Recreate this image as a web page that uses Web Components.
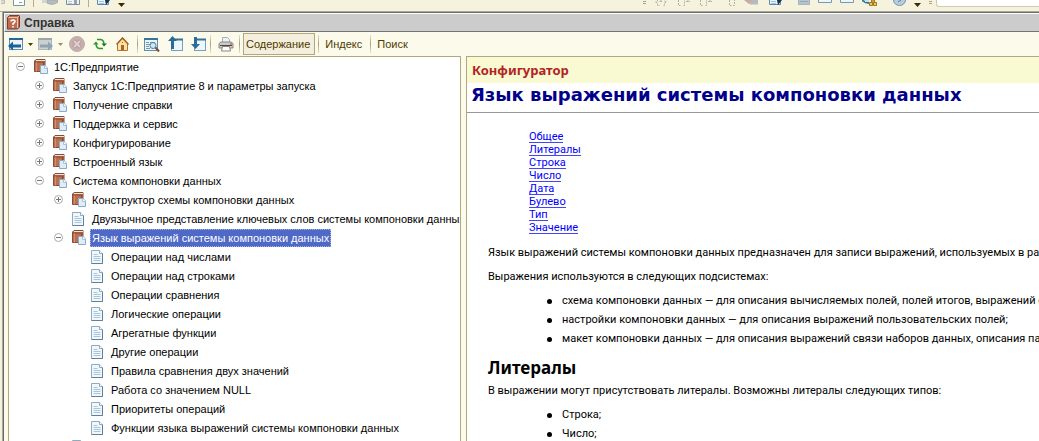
<!DOCTYPE html>
<html lang="ru">
<head>
<meta charset="utf-8">
<title>Справка</title>
<style>
  html, body { height: 100%; }
  body { margin: 0; overflow: hidden; font: 11px/13px "Liberation Sans", Arial, sans-serif; color: #000; background: #f5f2dd; }
</style>
</head>
<body>
<help-app></help-app>

<script>
const ICONS = {
  book: [15, 15, `<path d="M.5 2 2 .5h9v10.500l-1.500 1.500h-9z" fill="#b8704e" stroke="#8a4a33"/><path d="M2 1.500h9" stroke="#f2e4da"/><path d="M1 3h8.500" stroke="#8a4a33"/><path d="M2.500 3.500v9" stroke="#cf8f70"/><path d="M9.500 3v9" stroke="#8a4a33"/><path d="M6.500 6.500h4.500l2.500 2.500v5.500h-7z" fill="#deedf8" stroke="#8cabc2"/><path d="M10.500 6.500v3h3" fill="#fff" stroke="#a9c3d6"/>`],
  page: [12, 14, `<path d="M.5.5h8l3 3v10H.5z" fill="#f1f8fd" stroke="#8fabc0"/><path d="M11.500 3.500v10H.5" fill="none" stroke="#617f98"/><path d="M8.500.5v3h3" fill="#fff" stroke="#8fabc0"/><path d="M2.500 4.500h4m-4 2h7m-7 2h7m-7 2h7" stroke="#a9c5da"/>`],
  help: [13, 15, `<path d="M.5 2.500 2.500.5h10v11.500l-2 2H.5z" fill="#c06c4c" stroke="#763e2c"/><path d="M1.500 2.500h9v10.500M10.500 2.500l2-2" fill="none" stroke="#e8c5b2"/><path d="M4 6.500q0-1.500 2-1.500t2 1.500q0 1-2 2V10M6 11v1.500" fill="none" stroke="#fff" stroke-width="1.500"/>`],
  back: [15, 14, `<rect x="1.500" y="1.500" width="13" height="11" fill="#edf7fb" stroke="#5d8db2"/><path d="M1 2h14" stroke="#286698" stroke-width="2"/><path d="M0 9 5 4.500v3h8v3H5v3z" fill="#1c629a"/>`],
  forward: [15, 14, `<rect x=".5" y="1.500" width="13" height="11" fill="#ccd1cf" stroke="#adb7b9"/><path d="M0 2h14" stroke="#98a7ae" stroke-width="2"/><path d="M15 9 10 4.500v3H2v3h8v3z" fill="#8fa4b1"/>`],
  stop: [16, 16, `<circle cx="8" cy="8" r="7.500" fill="#c9b0b0" stroke="#c2aaaa"/><path d="m4.500 4.500 7 7m0-7-7 7" stroke="#b89c9c" stroke-width="4"/><path d="m5 5 6 6m0-6-6 6" stroke="#e0d0d0" stroke-width="2"/>`],
  refresh: [14, 12, `<path d="M4 1.500h3q4 0 4 5" fill="none" stroke="#2b9d23" stroke-width="1.500"/><path d="M8.500 5.500H14L11 8.500z" fill="#167b16"/><path d="M10 10.500H7q-4 0-4-5" fill="none" stroke="#2b9d23" stroke-width="1.500"/><path d="M0 6.500h5.500L3 3.500z" fill="#2c9a20"/>`],
  home: [13, 14, `<path d="M1.500 6.500 6.500 1l5 5.500v7h-10z" fill="#ffe3a2" stroke="#b57437"/><path d="M.5 7.500 6.500 1l6 6.500" fill="none" stroke="#a25c20" stroke-width="1.500"/><path d="M5 13V8h3v5z" fill="#a8622f"/><path d="M6 5h1v1H6z" fill="#a25c20"/>`],
  find: [16, 15, `<rect x=".5" y="1.500" width="13" height="12" fill="#e9f4f8" stroke="#608eae"/><path d="M0 2h14" stroke="#38739e" stroke-width="2"/><path d="M2 5.500h3m1 0h5m-9 2h4m-4 2h3m-3 2h4" stroke="#7798a8"/><circle cx="9" cy="8.500" r="3" fill="#cde9f2" stroke="#4e7f99"/><path d="m11.500 10.500 3.500 4" stroke="#765046" stroke-width="2"/>`],
  up: [15, 16, `<rect x="3.500" y="3.500" width="11" height="11" fill="#edf7fb" stroke="#77a0bc"/><path d="M5 3.500h10" stroke="#357099" stroke-width="2"/><path d="M4.500 0 0 5h3v8h3V5h3z" fill="#276c9d"/>`],
  down: [15, 16, `<rect x="3.500" y="3.500" width="11" height="11" fill="#edf7fb" stroke="#77a0bc"/><path d="M5 3.500h10" stroke="#357099" stroke-width="2"/><path d="M4.500 13 0 8h3V1h3v7h3z" fill="#276c9d"/>`],
  print: [16, 15, `<path d="M4.500 6V.5h5l2 2V6" fill="#eaf3f8" stroke="#9fb0bb"/><path d="M1 6.500 3 5h10l2 1.500V11H1z" fill="#d0cac6" stroke="#8b8785"/><path d="M2 8.500h12" stroke="#4a4745"/><path d="M4.500 9.500h7l1 4.500h-9z" fill="#fff" stroke="#8d8580"/><path d="M12 7h2" stroke="#d14122"/>`],
  caret: [5, 3, `<path d="M0 0h5L2.500 3z" fill="#4a3b00"/>`],
  caretdim: [5, 3, `<path d="M0 0h5L2.500 3z" fill="#a58a63"/>`],
  caretbig: [7, 4, `<path d="M0 0h7L3.500 4z" fill="#3f2b00"/>`],
  plus: [9, 9, `<circle cx="4.500" cy="4.500" r="4" fill="#fff" stroke="#aaa"/><path d="M2 4.500h5M4.500 2v5" stroke="#777"/>`],
  minus: [9, 9, `<circle cx="4.500" cy="4.500" r="4" fill="#fff" stroke="#aaa"/><path d="M2 4.500h5" stroke="#777"/>`],
  dimdoc: [4, 5, `<path d="M0 0h3.500v3.500H0" fill="#dcdcd3" stroke="#b9bbb5"/>`],
  doc: [12, 6, `<path d="M.5 0v5.500h11V0" fill="#fff" stroke="#7795ab"/><path d="M6 2.500h3" stroke="#7ba7c4"/>`],
  db: [16, 5, `<path d="M0 0h4v3H0z" fill="#d4d5ce"/><path d="M5 0h11v2q-5 4-11 1z" fill="#b5bcc0" stroke="#a1a9ad"/>`],
  table: [14, 5, `<path d="M.5 0v4.500h13V0" fill="#eef4f6" stroke="#7891a3"/><path d="M2 1.500h4m-4 2h4" stroke="#b4c7ce"/><path d="M8 0h3v4H8z" fill="#9aa3a8"/>`],
  edit: [13, 5, `<path d="M.5 0v4.500h11V0" fill="#e9f4fb" stroke="#5b89b3"/><path d="M2 1.500h5m-5 2h5" stroke="#9dc0da"/><path d="M8 0h5L9 5z" fill="#16344f"/>`],
  braceplus: [14, 6, `<path d="M3.500 0v1l-2 1 2 1v2.500h2M9.500 5.500h1V3l2-1-2-1V0M5.500 1.500h3M7 0v3" fill="none" stroke="#b1b0a5" stroke-dasharray="2 1"/>`],
  brace: [14, 6, `<path d="M2.500 0v5.500h2M7.500 5.500h1V0M10 1.500h4M12 0v3" fill="none" stroke="#b1b0a5" stroke-dasharray="2 1"/>`],
  braces: [8, 6, `<path d="M1.500 0v5.500h2M5 5.500h1.500V0" fill="none" stroke="#b1b0a5" stroke-dasharray="2 1"/>`],
  brush: [14, 5, `<path d="M4 0h10v4.500H6z" fill="#b7b9ba"/><path d="M0 0h8L5 4z" fill="#c5aca0"/>`],
  dimtable: [12, 5, `<path d="M.5 0v4.500h11V0" fill="#b6c3ce" stroke="#a7b4be"/><path d="M2 1.500h8" stroke="#96a9b9"/>`],
  sheet: [14, 3, `<path d="M.5 0v2.500h13V0" fill="#eef6fb" stroke="#6f9ab8"/>`],
  search: [15, 6, `<path d="M0 0q3 3 7 3" fill="none" stroke="#2c7d9b" stroke-width="2"/><path d="M3 0h4v2H3z" fill="#bfe2ef"/><path d="M9.500 0h3v2h-3zM7.500 2.500h3v3h-3zM11.500 2.500h3v3h-3z" fill="#f6c54a" stroke="#a1772a"/>`],
  clock: [13, 6, `<path d="M.5 0a6 5.500 0 0 0 12 0" fill="#a9d1ea" stroke="#84939e"/><path d="m5 2 3-2" stroke="#d44"/>`]
};

class UiIcon extends HTMLElement {
  constructor() {
    super();
    this.attachShadow({ mode: "open" });
  }
  connectedCallback() {
    const [w, h, body] = ICONS[this.getAttribute("name")];
    this.shadowRoot.innerHTML = `<style>:host{display:block;flex:none}svg{display:block}</style>
      <svg width="${w}" height="${h}" viewBox="0 0 ${w} ${h}" aria-hidden="true">${body}</svg>`;
  }
}

class ToolButton extends HTMLElement {
  constructor() {
    super();
    this.attachShadow({ mode: "open" });
  }
  connectedCallback() {
    const icon = this.getAttribute("icon");
    this.shadowRoot.innerHTML = `<style>
      :host{display:block;flex:none}
      button{display:flex;align-items:center;justify-content:center;box-sizing:border-box;height:22px;margin:0;padding:0;
        border:0;background:none;color:#4d3a00;font:inherit}
      button.text{padding:0 4px 0 2px;border:1px solid transparent}
      :host([pressed]) button{border-color:#b3a77c;background:#f3efdc}
      </style>
      <button type="button" class="${icon ? "icon" : "text"}" aria-label="${this.getAttribute("label") || this.textContent}">
      ${icon ? `<ui-icon name="${icon}"></ui-icon>` : "<slot></slot>"}</button>`;
  }
}

class ToolSeparator extends HTMLElement {
  constructor() {
    super();
    this.attachShadow({ mode: "open" }).innerHTML = `<style>:host{display:block;flex:none;width:1px;height:18px;
      background:linear-gradient(#e6e1c6,#a89e78 50%,#e6e1c6)}</style>`;
  }
}

/* The lower edge of the main window's toolbar, above the help window. */
class MainStrip extends HTMLElement {
  constructor() {
    super();
    this.attachShadow({ mode: "open" }).innerHTML = `<style>
      :host{display:flex;justify-content:space-between;height:11px;overflow:hidden;background:#f5f2dd}
      .group{display:flex;align-items:flex-start;gap:8px}
      .left{padding-left:1px}
      .right{width:396px;flex:none}
      .caret{padding-top:3px}
      .sep{width:1px;height:7px;background:#b6ad8a}
      .grip{flex:none;width:3px;height:1px;margin-top:1px;border:solid #a9a27e;border-width:1px 0}
      .apart{padding-left:8px}
      .brush{padding-right:3px}
      .box{flex:1;display:flex;margin-left:-4px}
      input{flex:1;min-width:0;box-sizing:border-box;height:7px;margin:0;padding:0;border:1px solid #d2cba9;border-top:0;
        border-right:0;border-radius:0 0 0 3px;background:#fff}
      </style>
      <div class="group left"><ui-icon name="dimdoc"></ui-icon><ui-icon name="doc"></ui-icon><div class="sep"></div>
      <ui-icon name="db"></ui-icon><ui-icon name="table"></ui-icon><div class="sep"></div><ui-icon name="edit"></ui-icon>
      <ui-icon class="caret" name="caretbig"></ui-icon></div>
      <div class="group right"><div class="grip"></div><ui-icon name="braceplus"></ui-icon><ui-icon name="brace"></ui-icon>
      <ui-icon name="brace"></ui-icon><ui-icon class="apart" name="braces"></ui-icon><ui-icon class="brush" name="brush"></ui-icon><ui-icon name="edit"></ui-icon>
      <div class="sep"></div><ui-icon name="dimtable"></ui-icon><ui-icon name="sheet"></ui-icon><ui-icon name="sheet"></ui-icon>
      <ui-icon name="search"></ui-icon><div class="sep"></div><ui-icon name="clock"></ui-icon>
      <ui-icon class="caret" name="caretbig"></ui-icon><div class="grip"></div><div class="box"><input type="text" aria-label="Поиск"></div></div>`;
  }
}

class HelpToolbar extends HTMLElement {
  constructor() {
    super();
    this.attachShadow({ mode: "open" }).innerHTML = `<style>
      :host{display:flex;align-items:center;height:24px;padding-left:4px;background:#fcfaeb;font-size:11px}
      .nav,.pages,.tabs{display:flex;align-items:center}
      .nav{gap:5px;padding-right:8px}
      .pages{gap:8px;padding:0 4px 0 6px}
      .print{padding:0 5px 0 7px}
      .tabs{gap:3px;padding-left:3px}
      .wide{padding-left:4px}
      .stop{padding:0 3px 0 1px}
      </style>
      <div class="nav">
        <tool-button icon="back" label="Назад"></tool-button><tool-button icon="caret" label="История назад"></tool-button>
        <tool-button icon="forward" label="Вперед"></tool-button><tool-button icon="caretdim" label="История вперед"></tool-button>
        <tool-button class="stop" icon="stop" label="Остановить"></tool-button>
        <tool-button icon="refresh" label="Обновить"></tool-button>
        <tool-button class="wide" icon="home" label="Домой"></tool-button>
      </div>
      <tool-separator></tool-separator>
      <div class="pages">
        <tool-button icon="find" label="Найти в содержании"></tool-button>
        <tool-button icon="up" label="Предыдущая страница"></tool-button>
        <tool-button icon="down" label="Следующая страница"></tool-button>
      </div>
      <tool-separator></tool-separator>
      <tool-button class="print" icon="print" label="Печать"></tool-button>
      <tool-separator></tool-separator>
      <div class="tabs">
        <tool-button pressed>Содержание</tool-button><tool-separator></tool-separator>
        <tool-button>Индекс</tool-button><tool-separator></tool-separator>
        <tool-button>Поиск</tool-button>
      </div>`;
  }
}

class TreeNode extends HTMLElement {
  constructor() {
    super();
    this.attachShadow({ mode: "open" });
  }
  connectedCallback() {
    const state = this.getAttribute("state");
    const open = state === "open";
    this.shadowRoot.innerHTML = `<style>
      :host{display:block}
      .row{display:flex;align-items:center;height:19px;white-space:nowrap}
      .toggle{flex:none;width:18px;display:flex}
      button{display:block;margin:0;padding:0;border:0;background:none}
      .icon{flex:none;width:18px}
      .label{box-sizing:border-box;height:18px;line-height:18px;padding:0 2px}
      :host([selected]) .label{background:#4f69c6;color:#fff;outline:1px dotted #a3b2ea;outline-offset:-1px}
      .items{padding-left:19px}
      </style>
      <div class="row"><span class="toggle">${state ? `<button type="button" aria-expanded="${open}" aria-label="${open ? "Свернуть" : "Развернуть"}">
      <ui-icon name="${open ? "minus" : "plus"}"></ui-icon></button>` : ""}</span>
      <span class="icon"><ui-icon name="${state ? "book" : "page"}"></ui-icon></span>
      <span class="label">${this.getAttribute("label") || ""}</span></div>
      <div class="items"><slot></slot></div>`;
  }
}

class ContentsTree extends HTMLElement {
  constructor() {
    super();
    this.attachShadow({ mode: "open" }).innerHTML = `<style>
      :host{display:block;box-sizing:border-box;overflow:hidden;padding-left:7px;border:1px solid #b3a77c;border-bottom:0;background:#fff;
        font-size:11px}
      </style>
      <tree-node label="1С:Предприятие" state="open">
        <tree-node label="Запуск 1С:Предприятие 8 и параметры запуска" state="closed"></tree-node>
        <tree-node label="Получение справки" state="closed"></tree-node>
        <tree-node label="Поддержка и сервис" state="closed"></tree-node>
        <tree-node label="Конфигурирование" state="closed"></tree-node>
        <tree-node label="Встроенный язык" state="closed"></tree-node>
        <tree-node label="Система компоновки данных" state="open">
          <tree-node label="Конструктор схемы компоновки данных" state="closed"></tree-node>
          <tree-node label="Двуязычное представление ключевых слов системы компоновки данных"></tree-node>
          <tree-node label="Язык выражений системы компоновки данных" state="open" selected>
            <tree-node label="Операции над числами"></tree-node>
            <tree-node label="Операции над строками"></tree-node>
            <tree-node label="Операции сравнения"></tree-node>
            <tree-node label="Логические операции"></tree-node>
            <tree-node label="Агрегатные функции"></tree-node>
            <tree-node label="Другие операции"></tree-node>
            <tree-node label="Правила сравнения двух значений"></tree-node>
            <tree-node label="Работа со значением NULL"></tree-node>
            <tree-node label="Приоритеты операций"></tree-node>
            <tree-node label="Функции языка выражений системы компоновки данных"></tree-node>
          </tree-node>
          <tree-node></tree-node>
        </tree-node>
      </tree-node>`;
  }
}

class HelpArticle extends HTMLElement {
  constructor() {
    super();
    this.attachShadow({ mode: "open" }).innerHTML = `<style>
      :host{display:block;box-sizing:border-box;overflow:hidden;border:1px solid #b3a77c;border-width:1px 0 0 1px;background:#fff;
        font:11px/13px Roboto,"Noto Sans",Tahoma,sans-serif;white-space:nowrap}
      .section{height:26px;line-height:27px;padding-left:5px;background:#fafad2;color:#b22222;
        font-family:"Noto Sans",sans-serif;font-size:13px;font-weight:700}
      h1{margin:0;height:29px;line-height:24px;padding-left:4px;border-bottom:1px solid #999;color:#00008b;
        font-family:"DejaVu Sans",Verdana,sans-serif;font-size:18px;font-weight:700}
      nav{display:flex;flex-direction:column;align-items:flex-start;padding:17px 0 0 62px}
      a{box-sizing:border-box;height:13px;line-height:13px;color:#00f;text-decoration:none;border-bottom:1px solid #44f}
      .body{padding:12px 0 0 21px}
      p{margin:0 0 11px}
      p.lead{margin:0 0 8px}
      ul{margin:0;padding-left:74px;list-style:none}
      li{display:flex;align-items:center;height:19px}
      li::before{content:"";flex:none;width:5px;height:5px;margin:1px 10px 0 -15px;border-radius:50%;background:#000}
      h2{margin:10px 0 6px;line-height:20px;font-family:"Noto Sans",sans-serif;font-size:17px;font-weight:700}
      </style>
      <div class="section">Конфигуратор</div>
      <h1>Язык выражений системы компоновки данных</h1>
      <nav aria-label="Разделы"><a href="#general">Общее</a><a href="#literals">Литералы</a><a href="#string">Строка</a><a href="#number">Число</a>
        <a href="#date">Дата</a><a href="#boolean">Булево</a><a href="#type">Тип</a><a href="#value">Значение</a></nav>
      <div class="body">
        <p>Язык выражений системы компоновки данных предназначен для записи выражений, используемых в различных</p>
        <p class="lead">Выражения используются в следующих подсистемах:</p>
        <ul>
          <li>схема компоновки данных — для описания вычисляемых полей, полей итогов, выражений связи</li>
          <li>настройки компоновки данных — для описания выражений пользовательских полей;</li>
          <li>макет компоновки данных — для описания выражений связи наборов данных, описания параметров</li>
        </ul>
        <h2 id="literals">Литералы</h2>
        <p class="lead">В выражении могут присутствовать литералы. Возможны литералы следующих типов:</p>
        <ul><li id="string">Строка;</li><li id="number">Число;</li></ul>
      </div>`;
  }
}

class HelpWindow extends HTMLElement {
  constructor() {
    super();
    this.attachShadow({ mode: "open" }).innerHTML = `<style>
      :host{display:flex;flex-direction:column;min-width:0;border:solid #6b6b6b;border-width:1px 0 0 1px;background:#fcfaeb}
      header{display:flex;align-items:center;gap:4px;height:17px;padding-left:2px;border-top:1px solid #fff;border-bottom:1px solid #747474;
        border-left:1px solid #fff;background:#ccc}
      h2{margin:0;font:700 12px/16px "Liberation Sans",Arial,sans-serif;color:#333}
      </style>
      <header><ui-icon name="help"></ui-icon><h2>Справка</h2></header>
      <slot></slot>`;
  }
}

class HelpApp extends HTMLElement {
  constructor() {
    super();
    this.attachShadow({ mode: "open" }).innerHTML = `<style>
      :host{display:flex;flex-direction:column;height:100vh;overflow:hidden}
      .desk{flex:1;min-height:0;display:flex;border-top:1px solid #a9a797}
      .edge{flex:none;width:3px;box-sizing:border-box;border-right:1px solid #a9a797;background:#f5f2dd}
      help-window{flex:1}
      .panes{flex:1;min-height:0;display:grid;grid-template-columns:453px minmax(0,1fr);gap:5px;padding-left:4px}
      </style>
      <main-strip></main-strip>
      <div class="desk"><div class="edge"></div>
        <help-window><help-toolbar></help-toolbar>
          <div class="panes"><contents-tree></contents-tree><help-article></help-article></div>
        </help-window>
      </div>`;
  }
}

customElements.define("ui-icon", UiIcon);
customElements.define("tool-button", ToolButton);
customElements.define("tool-separator", ToolSeparator);
customElements.define("main-strip", MainStrip);
customElements.define("help-toolbar", HelpToolbar);
customElements.define("tree-node", TreeNode);
customElements.define("contents-tree", ContentsTree);
customElements.define("help-article", HelpArticle);
customElements.define("help-window", HelpWindow);
customElements.define("help-app", HelpApp);
</script>
</body>
</html>
